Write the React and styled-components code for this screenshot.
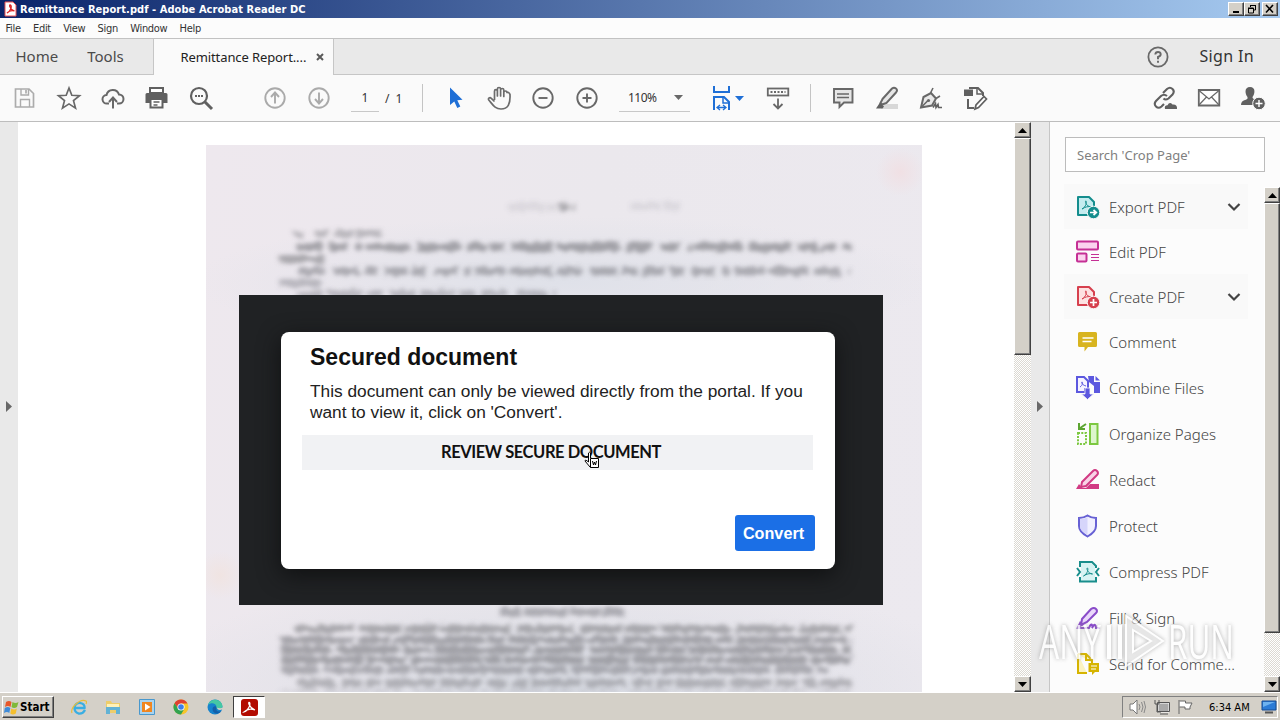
import styled, { createGlobalStyle } from 'styled-components';

const tools = [
  { name: 'Export PDF', icon: 'export', open: true },
  { name: 'Edit PDF', icon: 'edit' },
  { name: 'Create PDF', icon: 'create', open: true },
  { name: 'Comment', icon: 'comment', tall: true },
  { name: 'Combine Files', icon: 'combine', tall: true },
  { name: 'Organize Pages', icon: 'organize', tall: true },
  { name: 'Redact', icon: 'redact', tall: true },
  { name: 'Protect', icon: 'protect', tall: true },
  { name: 'Compress PDF', icon: 'compress', tall: true },
  { name: 'Fill & Sign', icon: 'sign', tall: true },
  { name: 'Send for Comme...', icon: 'send', tall: true },
];

// 24x24 icons of the right-hand tools panel
const toolIcons = {
  export: (
    <>
      <path d='M2 2h11l5 5v13H2z' fill='#c4ecef' stroke='#148d8d' strokeWidth='2' strokeLinejoin='round' />
      <path d='M6 14c4-2 5-7 4-8s-1 5 5 6c-3-1-6 0-9 2z' fill='none' stroke='#148d8d' />
      <circle cx='17.500' cy='17.500' r='6.300' fill='#148d8d' stroke='#fafafa' />
      <path d='M14 17.500h6m-2.500-2.500 2.800 2.500-2.800 2.500' fill='none' stroke='#fff' strokeWidth='1.700' />
    </>
  ),
  edit: (
    <g fill='#fbd3ee' stroke='#c53095' strokeWidth='2'>
      <rect x='1' y='1.500' width='21' height='8' rx='1' />
      <rect x='1' y='13.500' width='9.500' height='8' rx='1' />
      <path d='M15 14.500h8M15 17.500h8M15 20.500h8' strokeWidth='1' />
    </g>
  ),
  create: (
    <>
      <path d='M2 2h11l5 5v13H2z' fill='#fde2e2' stroke='#d6404e' strokeWidth='2' strokeLinejoin='round' />
      <path d='M6 14c4-2 5-7 4-8s-1 5 5 6c-3-1-6 0-9 2z' fill='none' stroke='#d6404e' />
      <circle cx='17.500' cy='17.500' r='6.300' fill='#d6404e' stroke='#fafafa' />
      <path d='M14 17.500h7m-3.500-3.500v7' stroke='#fff' strokeWidth='1.700' />
    </>
  ),
  comment: (
    <>
      <path d='M3.500 2h16q1.500 0 1.500 1.500v12q0 1.500-1.500 1.500H12l-3.500 4.500V17h-5Q2 17 2 15.500v-12Q2 2 3.500 2z' fill='#d8b41f' />
      <path d='M6.500 8h11M6.500 11.500h9' stroke='#fff' strokeWidth='1.600' />
    </>
  ),
  combine: (
    <>
      <path d='M12 0h6v6h6v11h-6v-7l-5-4z' fill='#5c58df' />
      <path d='M19.500 0 24 4.500h-4.500z' fill='#5c58df' />
      <path d='M1 1h7l4 4v8h-3v3H1z' fill='#f5f3ff' stroke='#5c58df' strokeWidth='2' />
      <path d='M4 11c3-2 3-5 2-5s0 3 4 4' fill='none' stroke='#5c58df' />
      <path d='M9 12h5v6h3.500l-6 5.500L5.500 18H9z' fill='#5c58df' stroke='#fafafa' strokeWidth='.8' />
    </>
  ),
  organize: (
    <>
      <rect x='14' y='2' width='7.500' height='20' fill='#ddf6cd' stroke='#7cc840' strokeWidth='2' />
      <path d='M2 11h8v11H2z' fill='none' stroke='#7cc840' strokeWidth='2' strokeDasharray='2 1.300' />
      <path d='M3 1v6h6M3.500 6.500 10 2' fill='none' stroke='#5ca531' strokeWidth='2' />
    </>
  ),
  redact: (
    <>
      <path d='M1 21h22v-5h-9l-4 4H6z' fill='#d13a83' />
      <path d='M6 14 17 3q2-2 4 0t0 4L10 18l-5 1z' fill='#f9d3e6' stroke='#d13a83' strokeWidth='2' />
      <path d='M0 21l3-5 4 5z' fill='#d13a83' />
    </>
  ),
  protect: (
    <>
      <path d='M11.500 1.500c3 2 5.500 2.500 8.500 2.500v8c0 5-4 8-8.500 10.500C7 20 3 17 3 12V4c3 0 5.500-.5 8.500-2.500z' fill='#f1f0ff' stroke='#6761d4' strokeWidth='2' />
      <path d='M11.500 3v18c-4-2.500-7.500-5-7.500-9V5c3 0 5.500-.5 7.500-2z' fill='#d6d5fb' />
    </>
  ),
  compress: (
    <>
      <path d='M5 3h10l4 4v14H5z' fill='#d7f3f3' />
      <path d='M4 7V2h12l4 4v2M4 17v4.500h16V17' fill='none' stroke='#198e8c' strokeWidth='2' />
      <path d='M1 8l3 4-3 4M23 8l-3 4 3 4' fill='none' stroke='#198e8c' strokeWidth='2' />
      <path d='M7.500 16c4-2 5-7 4-8s-1 5 5 6c-3-1-6 0-9 2z' fill='none' stroke='#198e8c' />
    </>
  ),
  sign: (
    <>
      <path d='M6 13 15 3q3-2 5 0t0 4l-9 9-6 3z' fill='#ead8fb' stroke='#8a4cc9' strokeWidth='2' />
      <path d='M0 23 4 15l4 4z' fill='#8a4cc9' />
      <path d='M1 22h12q2-5 3-3t0 3q2-4 3-3t1 3h4' fill='none' stroke='#8a4cc9' strokeWidth='2' />
    </>
  ),
  send: (
    <>
      <path d='M2 2h8l6 6v3M11 21H2V2' fill='#fbf3c1' stroke='#d6b400' strokeWidth='2' />
      <path d='M10 2v6h6' fill='none' stroke='#d6b400' strokeWidth='2' />
      <path d='M12.500 11H23v9h-4l-3 3v-3h-3.500z' fill='#d6b400' />
      <path d='M15 14h6M15 17h5' stroke='#fff' />
    </>
  ),
};

// 26x26 icons of the toolbar
const barIcons = {
  save: (
    <g fill='none' stroke='#acacac' strokeWidth='1.700'>
      <path d='M3.500 4h13.500l4.500 4.500V22h-18z' />
      <path d='M9 4v6h7.500V4M8.500 22v-7.500h9V22' strokeWidth='1.400' />
      <path d='M14 5v3.500' />
    </g>
  ),
  star: <path d='m13 3 2.800 7.300 7.700.4-6 4.900 2 7.500-6.500-4.200-6.500 4.200 2-7.500-6-4.900 7.700-.4z' fill='none' stroke='#686868' strokeWidth='1.700' />,
  cloud: (
    <g fill='none' stroke='#686868' strokeWidth='2'>
      <path d='M9 18.500H7a4.200 4.200 0 0 1-.5-8.500A6.500 6.500 0 0 1 19 9.500a4.500 4.500 0 0 1 0 9h-2' />
      <path d='M13 23.500V13m-4 4 4-4.500 4 4.500' />
    </g>
  ),
  print: (
    <>
      <path d='M6 3h13v5H6z' fill='#fff' stroke='#606060' strokeWidth='2' />
      <path d='M3 8h19q1.500 0 1.500 1.500V18H19v-4H6v4H1.500V9.500Q1.500 8 3 8z' fill='#606060' />
      <path d='M6.500 14h12v8.500h-12z' fill='#fff' stroke='#606060' strokeWidth='2' />
      <path d='M9.500 17h6M9.500 20h4' stroke='#606060' strokeWidth='1.300' />
    </>
  ),
  find: (
    <>
      <circle cx='11' cy='11' r='8' fill='none' stroke='#606060' strokeWidth='2.200' />
      <path d='m17 17 7 7' stroke='#606060' strokeWidth='3' />
      <path d='M7 11h2m1 0h2m1 0h2' stroke='#606060' strokeWidth='2' />
    </>
  ),
  up: (
    <g fill='none' stroke='#aaa' strokeWidth='1.900'>
      <circle cx='13' cy='13' r='9.700' />
      <path d='M13 18.500V8m-4 4 4-4.500 4 4.500' />
    </g>
  ),
  down: (
    <g fill='none' stroke='#aaa' strokeWidth='1.900'>
      <circle cx='13' cy='13' r='9.700' />
      <path d='M13 7.500V18m-4-4 4 4.500 4-4.500' />
    </g>
  ),
  pointer: <path d='M8 2.500v17.500l4.300-3.500 3 6.500 3-1.500-3-6.200 5.200-.5z' fill='#1f6fd6' />,
  hand: (
    <path
      d='M8.500 15V6.200c0-2 2.900-2 2.900 0V11 4c0-2 3.200-2 3.200 0v7V5c0-2 3.200-2 3.200 0v6.500V7.500c0-2 3.200-2 3.200 0 .3 0 2.500-.5 3 2C24.500 19 22 24 15 24 9 24 7 20 2.800 15c-1-1.700 1-3 2.500-1.700l3.200 3.200'
      fill='none'
      stroke='#6c6c6c'
      strokeWidth='1.700'
      strokeLinejoin='round'
    />
  ),
  minus: (
    <g fill='none' stroke='#686868' strokeWidth='1.900'>
      <circle cx='13' cy='13' r='9.700' />
      <path d='M8.500 13h9' />
    </g>
  ),
  plus: (
    <g fill='none' stroke='#686868' strokeWidth='1.900'>
      <circle cx='13' cy='13' r='9.700' />
      <path d='M8.500 13h9M13 8.500v9' />
    </g>
  ),
  fit: (
    <g fill='none' stroke='#1f6fd6' strokeWidth='2'>
      <path d='M6 1v6h15V1M6 25V12h10l5 5v8' />
      <path d='M15 12v6h6' strokeWidth='1.500' />
      <path d='M9 22.500h9m-6-2.500-3 2.500 3 2.500m3-5 3 2.500-3 2.500' strokeWidth='1.300' />
    </g>
  ),
  keyboard: (
    <g fill='none' stroke='#686868' strokeWidth='1.800'>
      <rect x='2.800' y='3.500' width='20.500' height='7' />
      <path d='M5.500 7h15' strokeDasharray='2 1.500' />
      <path d='M13 13.500v10M8.500 19l4.500 4.500 4.500-4.500' />
    </g>
  ),
  comment: (
    <g fill='#e6e6e6' stroke='#686868' strokeWidth='1.900'>
      <path d='M4 4h18.500v13.500H14L9.500 22v-4.500H4z' />
      <path d='M7 9h12M7 12.500h12' strokeWidth='1.300' />
    </g>
  ),
  marker: (
    <>
      <path d='M10 19h14v5H7z' fill='#d8d8d8' />
      <path d='M8.500 14 18 3.500q2-1.500 4 0t0 4L12.500 18l-4.500 1.500-1.500-1.500z' fill='#e6e6e6' stroke='#686868' strokeWidth='2' />
      <path d='M2 23.500l4-6 4 4-1.500 2z' fill='#606060' />
    </>
  ),
  pen: (
    <>
      <path d='M3 22.500 5.500 12l7.500-4 5 5.500-4 7z' fill='#e9e9e9' stroke='#686868' strokeWidth='2' />
      <path d='m12.500 8 2.500-5M18 13.500l4-2.500M3 22.500l7-7' fill='none' stroke='#686868' strokeWidth='1.600' />
      <circle cx='10.500' cy='15.500' r='1.600' fill='#686868' />
      <path d='m15 22.500 2.500-4 .5 4 2-3 .5 3H24' fill='none' stroke='#606060' strokeWidth='1.600' />
    </>
  ),
  stamp: (
    <g fill='none' stroke='#606060' strokeWidth='2'>
      <path d='M7 3h9l5 5v3M6 14v9h6' />
      <path d='M15 3v6h6' strokeWidth='1.500' />
      <path d='M3 5.500h7V10H3z' fill='#606060' />
      <path d='m13 24 1-4 8-8.500 2.500 2.500-8 8.500z' fill='#fff' strokeWidth='1.700' />
    </g>
  ),
  link: (
    <>
      <g fill='none' stroke='#606060' strokeWidth='2.100'>
        <path d='m11 8 4-4q3-2.500 5.500 0t0 5.500l-4 4q-3 2-5 0' />
        <path d='m15 11q-3-2.500-6 0l-5 5q-2.500 3 0 5.500t5.500 0l2.500-2.500' />
      </g>
      <path d='M13 24q-1-3.500 2.500-3.700 2-4 5-.8 5-.5 4.500 4.500z' fill='#606060' />
    </>
  ),
  mail: (
    <g fill='#fff' stroke='#686868' strokeWidth='1.800'>
      <path d='M2.800 5h20.500v15.500H2.800z' />
      <path d='m3 5.500 10 8.500 10-8.500M3 20l7.500-8M23 20l-7.500-8' fill='none' strokeWidth='1.200' />
    </g>
  ),
  person: (
    <>
      <path d='M10 2c6 0 5 7 2.500 10 0 3 4 2 5 4l-4 4H1q0-4 4-5c3-1 2.500-1.500 2.500-3C5 9 4 2 10 2z' fill='#606060' />
      <circle cx='19' cy='18.500' r='6.300' fill='#606060' stroke='#fafafa' />
      <path d='M15.500 18.500h7M19 15v7' stroke='#fff' strokeWidth='1.400' />
    </>
  ),
};

// [y, start, end, dash pattern, opacity] for each smudged line of the scanned page
const smudges = [
  [62, 304, 350, '34 3', 0.12],
  [62, 352, 370, '10 4 3 9', 0.55],
  [61, 424, 474, '30 4', 0.12],
  [89, 88, 180, '8 14 13 4 20 3 26 4', 0.42],
  [102, 90, 646, '26 8 18 8 5 4 46 6 43 7 19 4 15 7 40 5 62 8', 0.6],
  [114, 74, 120, '44 4', 0.55],
  [126, 92, 646, '26 9 26 6 14 5 23 5 15 7 24 6 6 5 30 6 40 5', 0.52],
  [138, 74, 114, '40 4', 0.4],
  [149, 90, 350, '26 7 32 6 15 7', 0.4],
  [467, 295, 420, '20 3 44 3 30 3', 0.5],
  [484, 90, 646, '58 5 42 4 33 3 70 5', 0.55],
  [495, 75, 646, '74 3 32 4 90 3 18 4', 0.58],
  [505, 75, 646, '50 5 64 3 28 3 96 4', 0.6],
  [515, 75, 646, '82 3 40 5 70 3 17 2', 0.6],
  [525, 75, 622, '38 4 62 3 22 3 110 5', 0.52],
  [538, 90, 646, '40 6 20 5 14 5 50 5', 0.45],
  [549, 75, 646, '38 5 30 4 52 5', 0.3],
];

const Icon = ({ size = 24, children }) => (
  <svg width={size} height={size} viewBox={`0 0 ${size} ${size}`}>
    {children}
  </svg>
);

const BarIcon = ({ name }) => (
  <Slot>
    <Icon size={26}>{barIcons[name]}</Icon>
  </Slot>
);

const Triangle = ({ dir, color = '#000' }) => (
  <svg width='9' height='5' viewBox='0 0 9 5'>
    <path d={dir === 'up' ? 'M0 5 4.500 0 9 5z' : 'M0 0h9L4.500 5z'} fill={color} />
  </svg>
);

const ScrollBar = ({ thumb, width = 17 }) => (
  <Scroll width={width}>
    <ScrollButton>
      <Triangle dir='up' />
    </ScrollButton>
    <Thumb size={thumb} />
    <Track />
    <ScrollButton>
      <Triangle dir='down' />
    </ScrollButton>
  </Scroll>
);

const TitleBar = () => (
  <Title>
    <svg width='13' height='16' viewBox='0 0 13 16'>
      <path d='M1 1h8l3 3v11H1z' fill='#fff' stroke='#e55' />
      <path d='M3 12c4-2 5-7 3.500-8S5 8 10.500 10C7 9 5 10 3 12z' fill='none' stroke='#d22' strokeWidth='1.300' />
    </svg>
    <span>Remittance Report.pdf - Adobe Acrobat Reader DC</span>
    <WindowButtons>
      <WindowButton>
        <svg width='12' height='10'>
          <path d='M3 8h6' stroke='#000' strokeWidth='2' />
        </svg>
      </WindowButton>
      <WindowButton>
        <svg width='12' height='10' fill='none' stroke='#000'>
          <path d='M4 1.500h5.500M4.500 3V1M9.500 1v5H8M2 4h5.500v5h-5V4' />
          <path d='M2 4.500h6' />
        </svg>
      </WindowButton>
      <WindowButton $gap>
        <svg width='12' height='10'>
          <path d='m2 1 7 7.500m0-7.500-7 7.500' stroke='#000' strokeWidth='1.600' />
        </svg>
      </WindowButton>
    </WindowButtons>
  </Title>
);

const Toolbar = () => (
  <Bar>
    <BarIcon name='save' />
    <BarIcon name='star' />
    <BarIcon name='cloud' />
    <BarIcon name='print' />
    <BarIcon name='find' />
    <Space size={30} />
    <BarIcon name='up' />
    <BarIcon name='down' />
    <PageInput>1</PageInput>
    <PageTotal>/ 1</PageTotal>
    <Divider />
    <BarIcon name='pointer' />
    <BarIcon name='hand' />
    <BarIcon name='minus' />
    <BarIcon name='plus' />
    <Zoom>
      110%
      <Triangle dir='down' color='#686868' />
    </Zoom>
    <Fit>
      <Icon size={26}>{barIcons.fit}</Icon>
      <Triangle dir='down' color='#1f6fd6' />
    </Fit>
    <BarIcon name='keyboard' />
    <Space size={10} />
    <Divider />
    <BarIcon name='comment' />
    <BarIcon name='marker' />
    <BarIcon name='pen' />
    <BarIcon name='stamp' />
    <Share>
      <BarIcon name='link' />
      <BarIcon name='mail' />
      <BarIcon name='person' />
    </Share>
  </Bar>
);

const Document = () => (
  <Canvas>
    <Page>
      <Scan width='716' height='547'>
        <defs>
          <filter id='soft' x='0' y='0' width='716' height='547' filterUnits='userSpaceOnUse'>
            <feTurbulence type='fractalNoise' baseFrequency='0.16 0.2' numOctaves='2' seed='4' result='noise' />
            <feDisplacementMap in='SourceGraphic' in2='noise' scale='9' xChannelSelector='R' yChannelSelector='G' />
            <feGaussianBlur stdDeviation='2.700 2.300' />
          </filter>
        </defs>
        <g filter='url(#soft)' stroke='#77777d' strokeWidth='8'>
          {smudges.map(([y, from, to, dash, opacity], idx) => (
            <path key={idx} d={`M${from} ${y}H${to}`} strokeDasharray={dash} opacity={opacity} />
          ))}
        </g>
      </Scan>
      <Notice>
        <Dialog>
          <h1>Secured document</h1>
          <p>
            This document can only be viewed directly from the portal. If you
            <br />
            want to view it, click on 'Convert'.
          </p>
          <Review>
            REVIEW SECURE DOCUMENT
            <Cursor width='18' height='20' viewBox='0 0 18 20'>
              <path d='M5.500 9V3q1-1.500 2 0v5l7 2v7H7L2 11q0-2 3.500 1z' fill='#fff' stroke='#000' />
              <path d='M7.500 8.500h8v9h-8z' fill='#fff' stroke='#000' />
              <path d='m9.500 11 1 4 1-3 1 3 1-4' fill='none' stroke='#000' />
            </Cursor>
          </Review>
          <Convert>Convert</Convert>
        </Dialog>
      </Notice>
    </Page>
  </Canvas>
);

const Panel = () => (
  <Side>
    <Search>Search 'Crop Page'</Search>
    <PanelBody>
      <ToolList>
        {tools.map((tool) => (
          <Tool key={tool.name} $tall={tool.tall} $open={tool.open}>
            <Icon>{toolIcons[tool.icon]}</Icon>
            <span>{tool.name}</span>
            {tool.open && (
              <svg width='14' height='10' viewBox='0 0 14 10'>
                <path d='m1.500 2 5.500 5.500L12.500 2' fill='none' stroke='#444' strokeWidth='2.200' />
              </svg>
            )}
          </Tool>
        ))}
      </ToolList>
      <PanelScroll>
        <ScrollBar thumb={430} width={16} />
      </PanelScroll>
    </PanelBody>
  </Side>
);

const Watermark = () => (
  <Mark width='210' height='76' viewBox='0 0 210 76'>
    <g fill='#fff' fontFamily='"Open Sans", sans-serif' fontWeight='400' fontSize='47'>
      <text x='8' y='53' textLength='62' lengthAdjust='spacingAndGlyphs'>
        ANY
      </text>
      <text x='137' y='53' textLength='66' lengthAdjust='spacingAndGlyphs'>
        RUN
      </text>
    </g>
    <path d='M78 19v34M89 19v34' stroke='#fff' strokeWidth='4' />
    <path d='M95 10v50l37-25zm7 14 18 11-18 11z' fill='#fff' fillOpacity='.5' stroke='#fff' strokeWidth='2' />
  </Mark>
);

const Taskbar = () => (
  <Tasks>
    <Start>
      <svg width='16' height='16' viewBox='0 0 16 16'>
        <path d='M2 3q3-2 5.500 0L6.500 8Q4 6 1 8z' fill='#e8582a' />
        <path d='M8.500 3q3 2 6 0l-1.500 5q-3 2-5.500 0z' fill='#7fb93a' />
        <path d='M.8 9q3-2 5.500 0l-1 5Q3 12 0 14z' fill='#3f8bd8' />
        <path d='M7.300 9.500q3 2 5.500 0l-1 5q-3 2-5.500 0z' fill='#f5bf2e' />
      </svg>
      Start
    </Start>
    <Pinned>
      <svg width='16' height='16' viewBox='0 0 16 16'>
        <path d='M14 11q-2 4-6.500 3.500-4.500-1.500-4-6.500 1.500-4.500 6-4 4.500 1 4 5H4' fill='none' stroke='#39aee3' strokeWidth='2.300' />
        <path d='M1 14C-1 9 9-1 15 2q1 1 0 3' fill='none' stroke='#e8bd3b' strokeWidth='1.200' />
      </svg>
    </Pinned>
    <Pinned>
      <svg width='16' height='16' viewBox='0 0 16 16'>
        <path d='M1 2h5l1 2h8v10H1z' fill='#edcd6b' />
        <path d='M2 5h12v4H2z' fill='#fff1b8' />
        <path d='M1 15V8h14v7h-4v-4H5v4z' fill='#62b2d5' />
      </svg>
    </Pinned>
    <Pinned>
      <svg width='16' height='16' viewBox='0 0 16 16'>
        <path d='M.5.500h15v15H.5z' fill='#a9d3ef' stroke='#4998cd' />
        <path d='M3 3h10v10H3z' fill='#f08620' />
        <path d='M6 4.500v7L11.500 8z' fill='#fff' />
      </svg>
    </Pinned>
    <Pinned>
      <svg width='16' height='16' viewBox='0 0 16 16'>
        <circle cx='8' cy='8' r='7.500' fill='#f7c52a' />
        <path d='M1.500 4.200A7.500 7.500 0 0 1 14.500 4.500H8L5 9.500z' fill='#df4032' />
        <path d='M1.500 4.200A7.500 7.500 0 0 0 8 15.500l3.500-6-6 .5z' fill='#32a350' />
        <circle cx='8' cy='8' r='3.600' fill='#fff' />
        <circle cx='8' cy='8' r='2.800' fill='#3d7eea' />
      </svg>
    </Pinned>
    <Pinned>
      <svg width='16' height='16' viewBox='0 0 16 16'>
        <circle cx='8' cy='8' r='7.500' fill='#1683cd' />
        <path d='M1 6C3-1 14-1 15.500 7c0 4-6 4-6 2C10 4 4 3 1 6z' fill='#45c8a4' />
        <path d='M9.500 9c-1 4 3 4 5 3-3 4-9 3-9-2 0-3 4-4 4-1z' fill='#145fa8' />
        <path d='M9 8q2 0 1.500 2 2 2 5.500 0V8.500q-2 1-5 .5z' fill='#d4d0c8' />
      </svg>
    </Pinned>
    <ActiveTask>
      <svg width='17' height='17' viewBox='0 0 17 17'>
        <rect width='17' height='17' rx='3' fill='#b30b00' />
        <path d='M3 13c4-1 7-8 5.500-9.500S7 8 14 11C10 9.500 6 10 3 13z' fill='none' stroke='#fff' strokeWidth='1.200' />
      </svg>
    </ActiveTask>
    <Tray>
      <svg width='17' height='16' viewBox='0 0 17 16'>
        <path d='M1 5h3l4-4v14l-4-4H1z' fill='#fff' stroke='#777' />
        <path d='M10 5q2 3 0 6M12.500 3q3 5 0 10M15 2q3 6 0 12' fill='none' stroke='#888' />
      </svg>
      <svg width='17' height='16' viewBox='0 0 17 16'>
        <path d='M5 4h11v9H5z' fill='#a9a9a9' stroke='#fff' />
        <path d='M4.500 3.500h12v9h-12zM7 15h8M2 1v4h4V1M4 5v8h4' fill='none' stroke='#555' />
      </svg>
      <svg width='17' height='16' viewBox='0 0 17 16'>
        <path d='M2 1v14M2.500 2h6v2H15l-2 4 0 2H8V8H2.500' fill='#fff' stroke='#666' />
      </svg>
      <time>6:34 AM</time>
      <svg width='16' height='16' viewBox='0 0 16 16'>
        <path d='M1 2h14v9H1z' fill='#2c7bd6' stroke='#174b91' />
        <path d='M2 3h12L2 8z' fill='#6eb2f0' />
        <path d='M4 13.500h8' stroke='#555' strokeWidth='2' />
      </svg>
    </Tray>
  </Tasks>
);

const App = () => {
  return (
    <>
      <GlobalStyle />
      <Desktop>
        <TitleBar />
        <Menu>
          <span>File</span>
          <span>Edit</span>
          <span>View</span>
          <span>Sign</span>
          <span>Window</span>
          <span>Help</span>
        </Menu>
        <Tabs>
          <TabLinks>
            <span>Home</span>
            <span>Tools</span>
          </TabLinks>
          <ActiveTab>
            <span>Remittance Report....</span>
            <svg width='8' height='8' viewBox='0 0 8 8'>
              <path d='m1 1 6 6m0-6L1 7' stroke='#5a5a5a' strokeWidth='2' />
            </svg>
          </ActiveTab>
          <Account>
            <svg width='22' height='22' viewBox='0 0 22 22'>
              <circle cx='11' cy='11' r='9.600' fill='none' stroke='#686868' strokeWidth='1.800' />
              <path d='M8.300 8.500q.2-2.500 2.700-2.500t2.700 2.200Q13.700 10 11 11v2.200M11 14.700v2' fill='none' stroke='#686868' strokeWidth='1.900' />
            </svg>
            <span>Sign In</span>
          </Account>
        </Tabs>
        <Toolbar />
        <Main>
          <Gutter>
            <svg width='6' height='11'>
              <path d='M0 0v11l6-5.500z' fill='#686868' />
            </svg>
          </Gutter>
          <Document />
          <ScrollBar thumb={217} />
          <Gutter>
            <svg width='6' height='11'>
              <path d='M0 0v11l6-5.500z' fill='#686868' />
            </svg>
          </Gutter>
          <Panel />
        </Main>
        <Taskbar />
        <Watermark />
      </Desktop>
    </>
  );
};

const GlobalStyle = createGlobalStyle`
  * {
    box-sizing: border-box;
  }
  body {
    margin: 0;
    overflow: hidden;
  }
  svg {
    display: block;
    flex-shrink: 0;
  }
`;

const Desktop = styled.div`
  position: relative;
  display: flex;
  flex-direction: column;
  width: 1280px;
  height: 720px;
  overflow: hidden;
  background-color: #fafafa;
  color: #333333;
  font-family: 'Noto Sans', sans-serif;
  white-space: nowrap;
`;

const Title = styled.div`
  display: flex;
  align-items: center;
  height: 18px;
  flex-shrink: 0;
  padding: 0 2px 0 4px;
  background: linear-gradient(90deg, #0a246a, #a6caf0);
  color: #ffffff;
  font: bold 11px 'DejaVu Sans Condensed', 'DejaVu Sans', sans-serif;
  font-stretch: condensed;
  letter-spacing: 0.06px;
  span {
    margin-left: 3px;
  }
`;

const WindowButtons = styled.div`
  display: flex;
  margin-left: auto;
`;

const raised = `
  background-color: #d4d0c8;
  border: 1px solid;
  border-color: #ffffff #404040 #404040 #ffffff;
  box-shadow: inset -1px -1px #808080;
`;

const WindowButton = styled.div`
  ${raised}
  display: flex;
  align-items: center;
  justify-content: center;
  width: 16px;
  height: 14px;
  margin-left: ${(props) => (props.$gap ? 2 : 0)}px;
`;

const Menu = styled.div`
  display: flex;
  align-items: center;
  gap: 12.2px;
  height: 20px;
  flex-shrink: 0;
  padding-left: 5.5px;
  font: 11px 'DejaVu Sans Condensed', 'DejaVu Sans', sans-serif;
  font-stretch: condensed;
  letter-spacing: -0.3px;
  background-color: #fcfcfc;
`;

const Tabs = styled.div`
  display: flex;
  height: 37px;
  flex-shrink: 0;
  border-top: 1px solid #c2c2c2;
  font-size: 15px;
  span {
    padding-bottom: 1px;
  }
`;

const TabLinks = styled.div`
  display: flex;
  align-items: center;
  gap: 29px;
  width: 154px;
  padding-left: 15.5px;
  background-color: #e9e9e9;
  border: solid #c6c6c6;
  border-width: 0 1px 1px 0;
  color: #4b4b4b;
`;

const ActiveTab = styled.div`
  display: flex;
  align-items: center;
  gap: 10px;
  width: 179px;
  padding-left: 26.5px;
  color: #222222;
  font-size: 13px;
  letter-spacing: -0.1px;
`;

const Account = styled.div`
  display: flex;
  align-items: center;
  justify-content: flex-end;
  gap: 30px;
  flex: 1;
  padding-right: 26px;
  background-color: #e9e9e9;
  border: solid #c6c6c6;
  border-width: 0 0 1px 1px;
  span {
    font-size: 16px;
    letter-spacing: 0.35px;
  }
`;

const Bar = styled.div`
  display: flex;
  align-items: center;
  height: 47px;
  flex-shrink: 0;
  padding: 0 5px 0 3px;
  border-bottom: 1px solid #bdbdbd;
  font-size: 12px;
`;

const Slot = styled.div`
  display: flex;
  justify-content: center;
  width: 44px;
`;

const Space = styled.div`
  width: ${(props) => props.size}px;
`;

const PageInput = styled.div`
  width: 28px;
  height: 28px;
  margin-left: 10px;
  border-bottom: 1px solid #c8c8c8;
  line-height: 27px;
  text-align: center;
`;

const PageTotal = styled.div`
  width: 37px;
  margin-left: 6px;
  word-spacing: 3px;
`;

const Divider = styled.div`
  width: 1px;
  height: 28px;
  margin-right: 10px;
  background-color: #c4c4c4;
`;

const Zoom = styled.div`
  display: flex;
  align-items: center;
  justify-content: space-between;
  width: 71px;
  height: 28px;
  margin-left: 10px;
  padding: 0 7px 0 9px;
  border-bottom: 1px solid #c8c8c8;
  letter-spacing: -0.5px;
`;

const Fit = styled.div`
  display: flex;
  align-items: center;
  width: 66px;
  padding-left: 18px;
  svg:last-child {
    margin-left: 1px;
  }
`;

const Share = styled.div`
  display: flex;
  margin-left: auto;
`;

const Main = styled.div`
  display: flex;
  height: 570px;
  flex-shrink: 0;
`;

const Gutter = styled.div`
  display: flex;
  align-items: center;
  justify-content: center;
  width: 18px;
  padding-bottom: 2px;
  background-color: #e9e9e9;
`;

const Canvas = styled.div`
  width: 996px;
  padding: 23px 0 0 188px;
  background-color: #ffffff;
  overflow: hidden;
`;

const Page = styled.div`
  position: relative;
  width: 716px;
  height: 547px;
  padding: 150px 0 0 33px;
  background:
    radial-gradient(circle at 694px 27px, #f0e0e4 0, transparent 24px),
    radial-gradient(circle at 14px 430px, #f0e4e2 0, transparent 24px),
    radial-gradient(ellipse 60% 22% at 50% 100%, #d9dce4 0, transparent 100%),
    radial-gradient(ellipse 52% 12% at 50% 25%, #dfe1e9 0, transparent 100%),
    linear-gradient(100deg, #eee8ee, #ebe8ed 50%, #ece9ef);
`;

const Scan = styled.svg`
  position: absolute;
  top: 0;
  left: 0;
`;

const Notice = styled.div`
  position: relative;
  width: 644px;
  height: 310px;
  padding: 37px 0 0 42px;
  background-color: #202224;
`;

const Dialog = styled.div`
  display: flex;
  flex-direction: column;
  width: 554px;
  height: 237px;
  padding: 12px 20px 0 21px;
  border-radius: 8px;
  background-color: #ffffff;
  box-shadow: 0 6px 22px #101112;
  color: #111111;
  font-family: 'Liberation Sans', sans-serif;
  h1 {
    margin: 0 0 0 8px;
    font-size: 23px;
    line-height: 26px;
  }
  p {
    margin: 11px 0 13px 8px;
    font-size: 17.3px;
    line-height: 20.5px;
    color: #222222;
  }
`;

const Review = styled.div`
  position: relative;
  width: 511px;
  height: 35px;
  padding-right: 13px;
  background-color: #f1f2f4;
  font: bold 16.5px/34px Lato, sans-serif;
  letter-spacing: -0.43px;
  text-align: center;
`;

const Cursor = styled.svg`
  position: absolute;
  left: 281px;
  top: 15px;
`;

const Convert = styled.div`
  width: 80px;
  height: 36px;
  margin: 45px 0 0 auto;
  padding-right: 3px;
  border-radius: 3px;
  background-color: #1b6fe6;
  color: #ffffff;
  font-size: 16.2px;
  font-weight: bold;
  line-height: 36px;
  text-align: center;
`;

const Scroll = styled.div`
  display: flex;
  flex-direction: column;
  width: ${(props) => props.width}px;
  height: 100%;
  flex-shrink: 0;
`;

const ScrollButton = styled.div`
  ${raised}
  display: flex;
  align-items: center;
  justify-content: center;
  height: 16px;
  flex-shrink: 0;
`;

const Thumb = styled.div`
  ${raised}
  height: ${(props) => props.size}px;
  flex-shrink: 0;
`;

const Track = styled.div`
  flex: 1;
  background: repeating-conic-gradient(#ffffff 0 25%, #dcd9d2 0 50%) 0 0 / 2px 2px;
`;

const Side = styled.div`
  display: flex;
  flex-direction: column;
  width: 231px;
  border-left: 1px solid #c6c6c6;
  background-color: #fcfcfc;
`;

const Search = styled.div`
  width: 200px;
  height: 35px;
  margin: 15px 0 0 15px;
  flex-shrink: 0;
  padding-left: 11px;
  border: 1px solid #bcbcbc;
  background-color: #ffffff;
  color: #808080;
  font-size: 13px;
  line-height: 34px;
`;

const PanelBody = styled.div`
  display: flex;
  flex: 1;
  min-height: 0;
  margin-top: 12px;
`;

const ToolList = styled.div`
  width: 198px;
  flex-shrink: 0;
  padding-left: 14px;
`;

const Tool = styled.div`
  display: flex;
  align-items: center;
  height: ${(props) => (props.$tall ? 46 : 45)}px;
  padding: 0 7px 0 12px;
  background-color: ${(props) => (props.$open ? '#f9f9f9' : 'transparent')};
  color: #444444;
  font-size: 15px;
  font-weight: 300;
  span {
    flex: 1;
    margin-left: 9px;
  }
`;

const PanelScroll = styled.div`
  margin-left: 16px;
  padding-top: 3px;
`;

const Mark = styled.svg`
  position: absolute;
  left: 1031px;
  top: 606px;
  opacity: 0.8;
  filter: drop-shadow(0 0 2px #999999);
`;

const Tasks = styled.div`
  display: flex;
  align-items: center;
  height: 28px;
  padding: 3px 2px 2px;
  border-top: 1px solid #ffffff;
  background-color: #d4d0c8;
`;

const Start = styled.div`
  ${raised}
  display: flex;
  align-items: center;
  width: 52px;
  height: 22px;
  margin-right: 8px;
  padding-left: 1px;
  color: #000000;
  font: bold 11.5px 'DejaVu Sans Condensed', 'DejaVu Sans', sans-serif;
  font-stretch: condensed;
`;

const Pinned = styled.div`
  display: flex;
  justify-content: center;
  width: 34px;
`;

const ActiveTask = styled.div`
  display: flex;
  align-items: center;
  justify-content: center;
  width: 32px;
  height: 22px;
  margin-left: 1px;
  border: 1px solid;
  border-color: #404040 #ffffff #ffffff #404040;
  background-color: #ffffff;
`;

const Tray = styled.div`
  display: flex;
  align-items: center;
  gap: 7px;
  width: 156px;
  height: 22px;
  margin-left: auto;
  padding-left: 6px;
  border: 1px solid;
  border-color: #808080 #ffffff #ffffff #808080;
  color: #000000;
  font: 11px 'DejaVu Sans Condensed', 'DejaVu Sans', sans-serif;
  font-stretch: condensed;
  time {
    width: 41px;
    margin: 0 4px 0 8px;
  }
`;

export default App;
